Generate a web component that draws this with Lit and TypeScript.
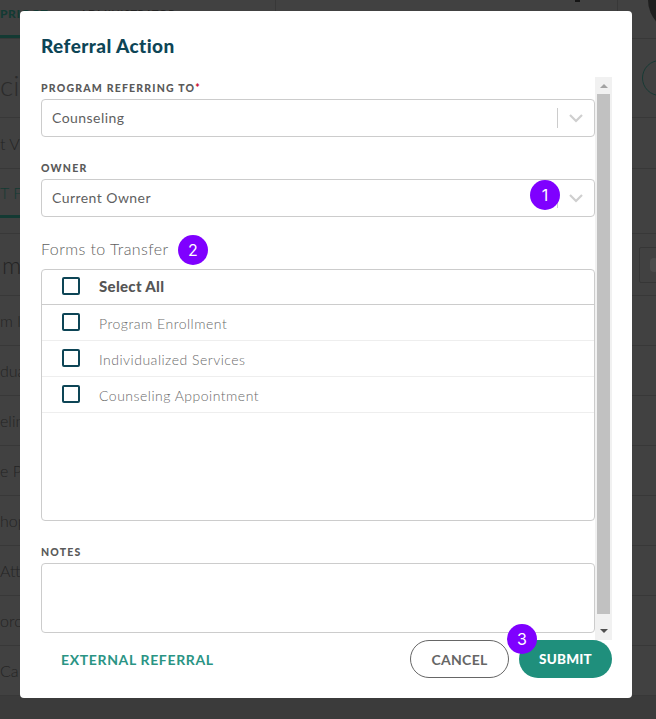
import { LitElement, html, css } from "lit";
import { customElement } from "lit/decorators.js";

const chevron = html`<svg class="chev" width="16" height="10" viewBox="0 0 16 10" fill="none"><path d="M2 2l6 6 6-6" stroke="#cfcfcf" stroke-width="2.2"/></svg>`;

@customElement("app-root")
export class AppRoot extends LitElement {
  static styles = css`
    :host { display: block; width: 100%; height: 100vh; overflow: hidden; position: relative; background: #414141; font-family: Lato, "Liberation Sans", sans-serif; color: #555; }
    * { box-sizing: border-box; }

    .page { display: flex; flex-direction: column; height: 100%; color: #242424; }
    .head { height: 39px; flex: none; display: grid; grid-template-columns: 275px 342px 1fr; border-bottom: 1px solid #383838; overflow: hidden; }
    .tabs { display: flex; gap: 32px; font-size: 12px; font-weight: 900; letter-spacing: 0.6px; height: 39px; }
    .tab { padding-top: 6px; height: 38px; }
    .tab.on { width: 48px; border-bottom: 3px solid #133a33; color: #133a33; white-space: nowrap; }
    .tab.off { font-size: 11px; font-weight: 400; letter-spacing: 0.55px; padding-top: 7px; }
    .mid { border-left: 1px solid #383838; display: flex; justify-content: flex-end; padding-right: 37px; }
    .tick { width: 5px; height: 2px; background: #151515; }
    .end { border-left: 1px solid #383838; display: flex; justify-content: flex-end; }
    .avatar { flex: none; width: 64px; height: 64px; border-radius: 50%; background: #1f1f1f; margin: -32px -56px 0 0; }
    .r { flex: none; display: flex; align-items: center; justify-content: space-between; border-bottom: 1px solid #383838; font-size: 16px; font-weight: 300; white-space: nowrap; overflow: hidden; }
    .title { height: 79px; font-size: 28px; color: #2b2b2b; padding-top: 14px; }
    .title .ring { margin-top: -14px; }
    .ring { width: 36px; height: 36px; border-radius: 50%; border: 1px solid #173a35; margin-right: -22px; }
    .tabrow { height: 49px; color: #133a33; position: relative; border-bottom: 3px solid transparent; }
    .strip { height: 16px; }
    .toolbar { height: 62px; font-size: 24px; padding-left: 2px; }
    .boxbtn { width: 36px; height: 36px; border: 1px solid #363636; border-radius: 2px; margin-right: -19px; padding: 10px 0 0 10px; }
    .blob { display: block; width: 8px; height: 14px; border-radius: 4px; background: #4c4c4c; }
    .row { height: 50px; }
    .rest { flex: 1; background: #3b3b3b; }
    .accent { height: 3px; width: 20px; background: #133a33; margin-top: -3px; flex: none; }

    .modal { position: absolute; left: 20px; top: 11px; width: 612px; height: 687px; background: #fff; border-radius: 4px; padding: 0 20px 0 21px; display: flex; flex-direction: column; }
    h2 { margin: 0; flex: none; height: 66px; padding-top: 23px; font-size: 19px; line-height: 24px; font-weight: 900; color: #0d4556; letter-spacing: 0.42px; }
    .scroll { flex: none; height: 563px; display: flex; gap: 0; }
    .content { width: 554px; display: flex; flex-direction: column; }
    label { display: block; height: 22px; padding-top: 5px; font-size: 10.5px; line-height: 13px; font-weight: 900; letter-spacing: 1.2px; color: #5a5a5a; text-transform: uppercase; }
    label b { color: #c8102e; font-weight: 900; letter-spacing: 0; }
    .select { height: 38px; flex: none; border: 1px solid #ccc; border-radius: 4px; display: flex; align-items: center; padding-left: 10px; font-size: 14px; letter-spacing: 0.45px; color: #5f5f5f; font-weight: 400; }
    .select .v { flex: 1; padding-bottom: 2px; }
    .sep { width: 1px; height: 20px; background: #ccc; }
    .chev { margin: 0 10px 0 10px; }
    .gap { height: 20px; flex: none; }
    .forms { height: 52px; flex: none; display: flex; align-items: center; font-size: 16px; font-weight: 300; letter-spacing: 0.42px; color: #5f5f5f; padding-top: 10px; }
    .table { height: 252px; flex: none; border: 1px solid #ccc; border-radius: 4px; }
    .tr { height: 36px; display: flex; align-items: center; padding: 0 0 1px 20px; gap: 19px; font-size: 14px; letter-spacing: 0.5px; color: #6a6a6a; font-weight: 300; border-bottom: 1px solid #eee; }
    .tr .t { padding-top: 3px; }
    .tr.th { height: 35px; border-bottom-color: #ccc; font-size: 15px; font-weight: 900; color: #555; letter-spacing: 0.3px; padding-bottom: 3px; }
    .tr.th .t { padding-top: 1px; }
    .box { width: 18px; height: 18px; flex: none; border: 2px solid #0d4556; border-radius: 2px; }
    .notes { height: 70px; flex: none; border: 1px solid #ccc; border-radius: 4px; }
    .notes-label { margin-top: 20px; }

    .bar { width: 17px; flex: none; background: #f1f1f1; display: flex; flex-direction: column; align-items: center; justify-content: space-between; }
    .arrow { width: 0; height: 0; border-left: 4px solid transparent; border-right: 4px solid transparent; }
    .arrow.up { border-bottom: 4px solid #a3a3a3; margin: 7px 0 6px; }
    .arrow.down { border-top: 4px solid #505050; margin: 15px 0 7px; }
    .thumb { flex: 1; width: 13px; background: #c1c1c1; }

    .foot { height: 38px; flex: none; display: flex; align-items: center; font-size: 14px; letter-spacing: 0.65px; font-weight: 700; }
    .ext { color: #2a9484; margin-left: 20px; flex: 1; padding-top: 1px; }
    .btn { height: 38px; border-radius: 19px; display: flex; align-items: center; justify-content: center; }
    .cancel { width: 99px; border: 1px solid #666; color: #666; margin-right: 10px; font-size: 14px; font-weight: 700; letter-spacing: 0.3px; }
    .submit { width: 93px; background: #1f8f7c; color: #fff; font-size: 13.5px; font-weight: 900; letter-spacing: 0.2px; }

    .badge { position: absolute; width: 30px; height: 30px; border-radius: 50%; background: #7f00ff; color: #fff; display: flex; align-items: center; justify-content: center; font-size: 16px; font-weight: 400; font-family: Inter, Roboto, sans-serif; }
    .b1 { left: 510px; top: 169px; }
    .b2 { left: 158px; top: 224px; }
    .b3 { left: 487px; top: 613px; }
  `;

  private rows = ["m l", "dua", "elin", "e P", "hop", "Atte", "orc", " Ca"];

  render() {
    return html`
      <div class="page">
        <div class="head">
          <div class="tabs"><div class="tab on">PRIOGT</div><div class="tab off">ADMINISTRATOR</div></div>
          <div class="mid"><span class="tick"></span></div>
          <div class="end"><span class="avatar"></span></div>
        </div>
        <div class="r title"><span>cia</span><span class="ring"></span></div>
        <div class="r" style="height:51px"><span>t Vi</span></div>
        <div class="r tabrow"><span>T F</span></div>
        <div class="accent"></div>
        <div class="r strip"></div>
        <div class="r toolbar"><span>m</span><span class="boxbtn"><span class="blob"></span></span></div>
        ${this.rows.map((t) => html`<div class="r row"><span>${t}</span></div>`)}
        <div class="rest"></div>
      </div>

      <div class="modal">
        <h2>Referral Action</h2>
        <div class="scroll">
          <div class="content">
            <label>Program Referring To<b>*</b></label>
            <div class="select"><span class="v">Counseling</span><span class="sep"></span>${chevron}</div>
            <div class="gap"></div>
            <label>Owner</label>
            <div class="select"><span class="v">Current Owner</span><span class="sep"></span>${chevron}</div>
            <div class="forms">Forms to Transfer</div>
            <div class="table">
              <div class="tr th"><span class="box"></span><span class="t">Select All</span></div>
              <div class="tr"><span class="box"></span><span class="t">Program Enrollment</span></div>
              <div class="tr"><span class="box"></span><span class="t">Individualized Services</span></div>
              <div class="tr"><span class="box"></span><span class="t">Counseling Appointment</span></div>
            </div>
            <label class="notes-label">Notes</label>
            <div class="notes"></div>
          </div>
          <div class="bar"><span class="arrow up"></span><span class="thumb"></span><span class="arrow down"></span></div>
        </div>
        <div class="foot">
          <span class="ext">EXTERNAL REFERRAL</span>
          <span class="btn cancel">CANCEL</span>
          <span class="btn submit">SUBMIT</span>
        </div>
        <span class="badge b1">1</span>
        <span class="badge b2">2</span>
        <span class="badge b3">3</span>
      </div>
    `;
  }
}
